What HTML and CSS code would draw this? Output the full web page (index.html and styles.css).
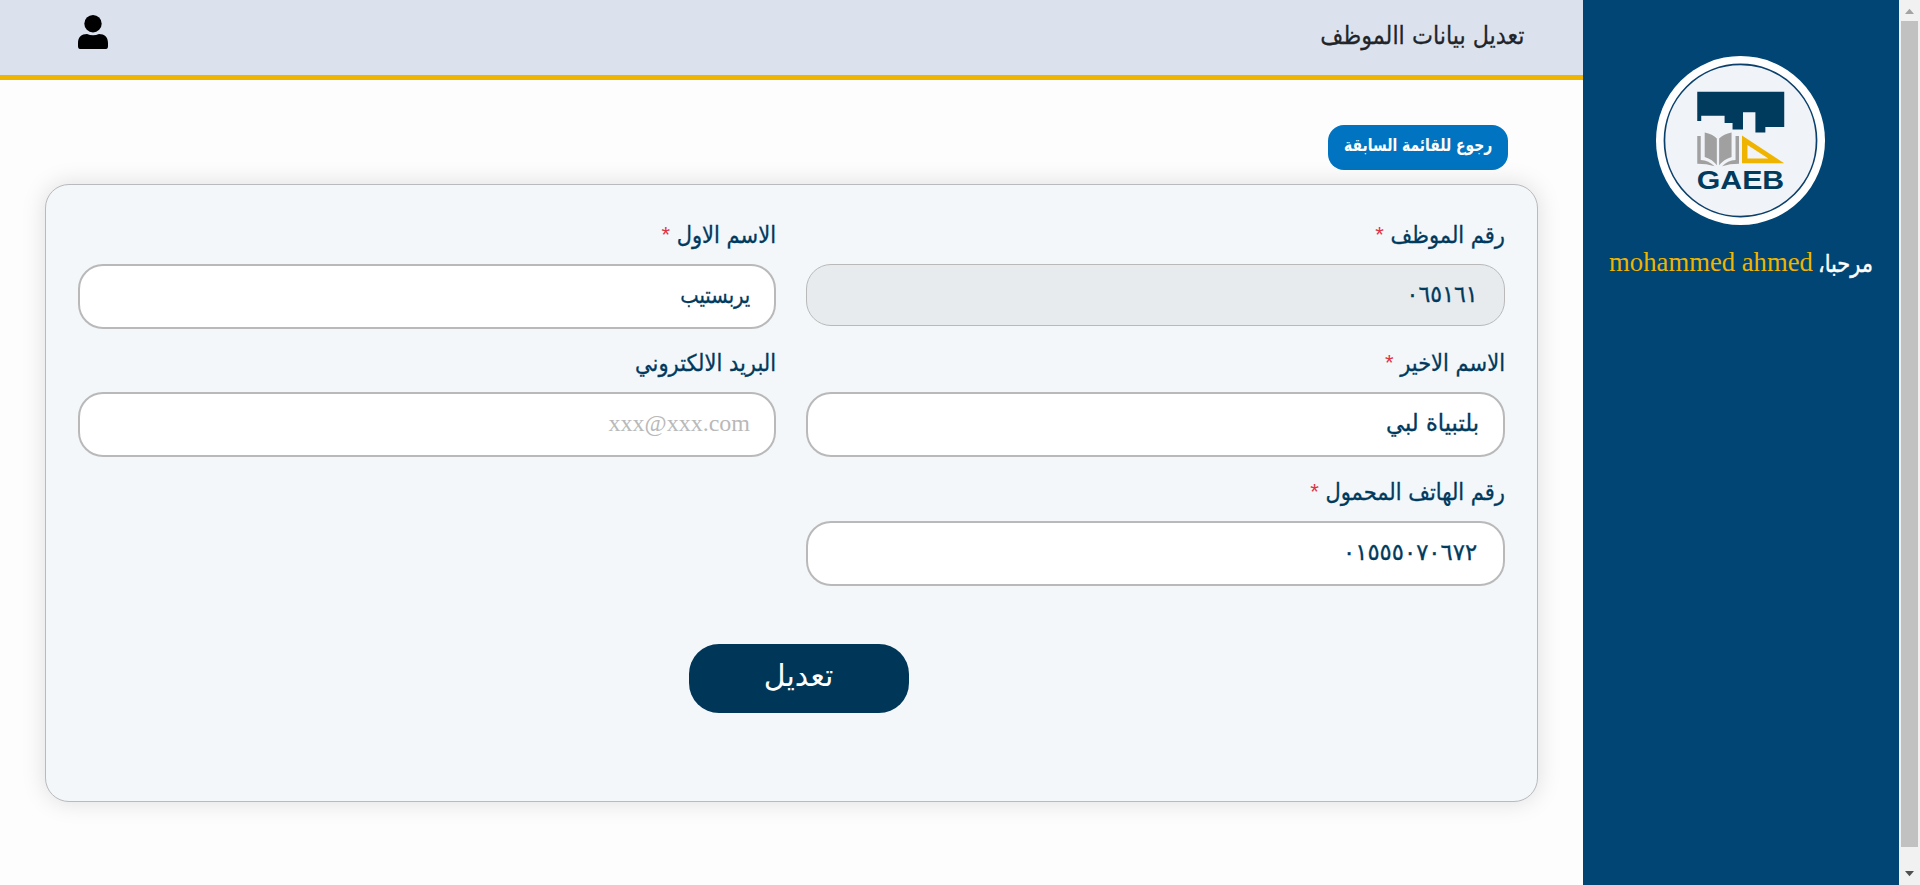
FILE: index.html
```
<!DOCTYPE html>
<html lang="ar" dir="rtl">
<head>
<meta charset="utf-8">
<title>تعديل بيانات الموظف</title>
<link rel="stylesheet" href="styles.css">
</head>
<body>
<div class="scrollbar">
  <svg class="arrow" viewBox="0 0 21 21" width="21" height="21"><path d="M6 14L10.500 8.800L15 14Z" fill="#a3a3a3"/></svg>
  <div class="thumb"></div>
  <svg class="arrow arrow-down" viewBox="0 0 21 21" width="21" height="21"><path d="M6 7H15L10.500 12.200Z" fill="#505050"/></svg>
</div>
<aside class="sidebar">
  <svg class="logo" viewBox="0 0 170 170" width="169" height="169">
    <circle cx="85" cy="85" r="85" fill="#fff"/>
    <circle cx="85" cy="85" r="76.500" fill="#f0f3f7" stroke="#0a406b" stroke-width="1.700"/>
    <path d="M41.500 36H129V71.500H110V77H100V56.500H87.500V74H77V67.500H69V60H45.500V65.500H41.500Z" fill="#003a5d"/>
    <path d="M41.500 80.500H45V104.500Q53 105 59 111Q51 108.500 41.500 108.500ZM83.500 80.500H80V104.500Q72 105 66.500 111Q74 108.500 83.500 108.500Z" fill="#a0a0a0"/>
    <path d="M49 77Q57 78.500 61.200 83V110Q57 104 49 101.500ZM76 77Q68 78.500 63.500 83V110Q68 104 76 101.500Z" fill="#a0a0a0"/>
    <path d="M86.500 80L129 108H86.500ZM92 89.500V103H113Z" fill="#efb400" fill-rule="evenodd"/>
    <text class="logo-text" x="41" y="133.500" textLength="88" lengthAdjust="spacingAndGlyphs" direction="ltr">GAEB</text>
  </svg>
  <p class="welcome"><span class="ar hello">مرحبا،</span><span class="user-name">mohammed ahmed</span></p>
</aside>
<main class="main">
  <header class="header">
    <h1 class="title"><span class="ar">تعديل بيانات االموظف</span></h1>
    <svg class="user-icon" viewBox="0 0 30 34" width="30" height="34"><circle cx="15" cy="8.700" r="8.700"/><path d="M0 30V28C0 22 3.500 19 9 19Q15 21.500 21 19C26.500 19 30 22 30 28V31Q30 34 28 34H2Q0 34 0 31Z"/></svg>
  </header>
  <div class="content">
    <a class="back"><span class="ar">رجوع للقائمة السابقة</span></a>
    <form class="card">
      <div class="grid">
        <div class="field"><label class="label"><span class="ar">رقم الموظف</span> <i class="req">*</i></label><div class="input disabled"><span class="ar num">٠٦٥١٦١</span></div></div>
        <div class="field"><label class="label"><span class="ar">الاسم الاول</span> <i class="req">*</i></label><div class="input"><span class="ar narrow">يربستيب</span></div></div>
        <div class="field"><label class="label"><span class="ar">الاسم الاخير</span> <i class="req">*</i></label><div class="input"><span class="ar wide">بلتبياة لبي</span></div></div>
        <div class="field"><label class="label"><span class="ar">البريد الالكتروني</span></label><div class="input"><span class="placeholder">xxx@xxx.com</span></div></div>
        <div class="field"><label class="label"><span class="ar">رقم الهاتف المحمول</span> <i class="req">*</i></label><div class="input"><span class="ar num wide">٠١٥٥٥٠٧٠٦٧٢</span></div></div>
      </div>
      <button type="button" class="submit"><span class="ar">تعديل</span></button>
    </form>
  </div>
</main>
</body>
</html>
```
FILE: styles.css
```
* { box-sizing: border-box; }
body { margin: 0; height: 885px; display: flex; overflow: hidden; background: #fdfdfd; font-family: "DejaVu Sans", sans-serif; color: #003a5d; }
.ar { display: inline-block; white-space: nowrap; }
.scrollbar { width: 21px; flex: none; background: #f1f1f1; display: flex; flex-direction: column; }
.arrow { display: block; direction: ltr; flex: none; }
.thumb { flex: none; height: 826px; width: 17px; margin: 0 2px; background: #c1c1c1; }
.arrow-down { margin-top: 17px; }
.sidebar { width: 316px; flex: none; background: #004573; display: flex; flex-direction: column; align-items: center; padding-top: 56px; }
.logo { display: block; direction: ltr; margin-right: 1px; }
.logo-text { font: bold 25px "Liberation Sans", sans-serif; fill: #003a5d; }
.welcome { margin: 20px 0 0; height: 34px; line-height: 34px; color: #fff; font-size: 22px; white-space: nowrap; }
.hello { margin-left: 2px; -webkit-text-stroke: .4px; transform: scale(.95, 1.1); transform-origin: right center; }
.user-name { font: 26.700px/34px "Liberation Serif", serif; color: #efb400; }
.main { flex: 1; min-width: 0; }
.header { height: 80px; background: #dbe2ed; border-bottom: 5px solid #efb400; padding: 0 58px 0 78px; display: flex; justify-content: space-between; }
.title { margin: 14px 0 0; font-size: 23px; font-weight: 400; line-height: 42px; color: #212529; }
.title .ar { transform: scale(.97, 1.1); transform-origin: right center; -webkit-text-stroke: .25px; }
.user-icon { margin-top: 15px; }
.content { padding: 45px 45px 0; }
.back { width: 180px; height: 45px; margin-right: 30px; border-radius: 16px; background: #0074c1; color: #fff; font-size: 16px; font-weight: 700; display: flex; justify-content: center; line-height: 42px; }
.back .ar { transform: scale(.87, 1.1); }
.card { margin-top: 14px; height: 618px; border: 1px solid #b8babd; border-radius: 24px; background: #f3f7fa; box-shadow: 0 0 25px rgba(0,0,0,.13); padding: 32px 32px 0; display: flex; flex-direction: column; align-items: center; }
.grid { width: 100%; display: grid; grid-template-columns: 699px 698px; column-gap: 30px; grid-auto-rows: 128.400px; }
.label { display: block; height: 47px; line-height: 37px; font-size: 21px; white-space: nowrap; }
.label .ar, .input .ar { transform: scaleY(1.1); transform-origin: right center; -webkit-text-stroke: .3px; }
.req { font: normal 22px/30px "Liberation Sans", sans-serif; color: #dc3545; }
.input { height: 65px; border: 2px solid #b9b9b9; border-radius: 25px; background: #fff; padding: 0 24px; font-size: 21px; line-height: 58px; }
.disabled { height: 62px; border-width: 1px; background: #e8ebee; }
.input .num { margin-right: 2px; transform: scale(1.05, 1.1); }
.input .wide { transform: scale(1.08, 1.1); }
.input .narrow { transform: scale(.93, 1.1); }
.placeholder { font: 24px/59px "Liberation Serif", serif; color: #b9b9b9; }
.submit { margin: 41.800px -14px 0 0; width: 220px; height: 69px; flex: none; border: 0; border-radius: 30px; background: #003759; color: #fff; font: 30px/61px "DejaVu Sans", sans-serif; padding: 0 0 6px; }
```
